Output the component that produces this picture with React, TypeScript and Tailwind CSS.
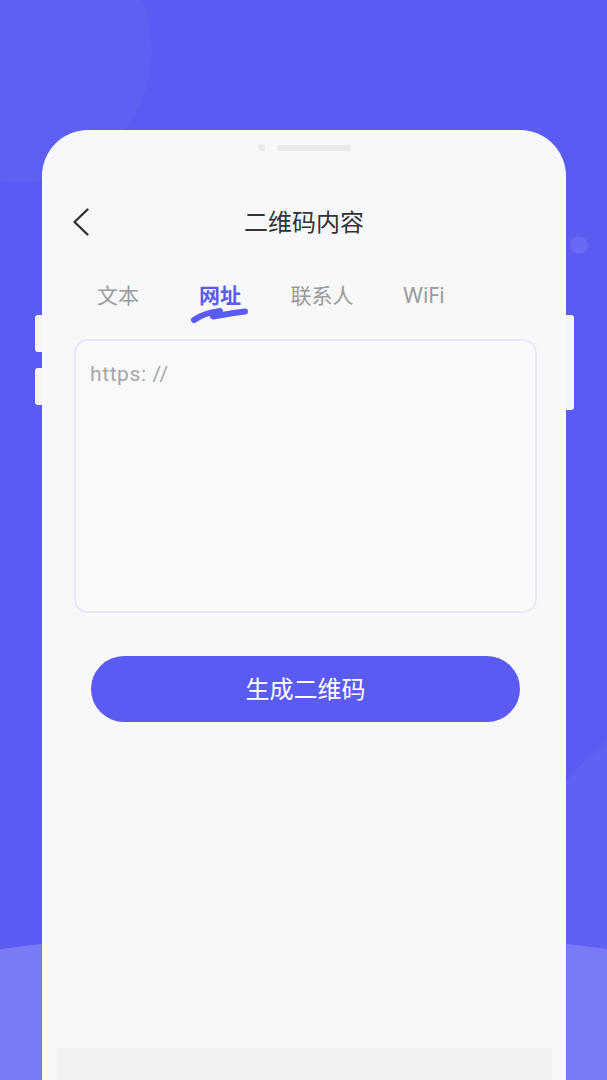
const tabs = ["文本", "网址", "联系人", "WiFi"];
const active = 1;

function Brush() {
  return (
    <svg
      className="absolute left-1/2 top-[29px] -translate-x-1/2"
      width="62"
      height="20"
      viewBox="0 0 62 20"
      fill="none"
    >
      <path
        d="M5 15 C13 9 23 7 31 6 L24 11.5 C35 9.5 46 7.5 56 6.5"
        stroke="#5b5bf3"
        strokeWidth="6"
        strokeLinecap="round"
        strokeLinejoin="round"
      />
    </svg>
  );
}

export default function App() {
  return (
    <main
      className="relative h-[1080px] w-full overflow-hidden bg-[#5b5bf3]"
      style={{ fontFamily: '"Noto Sans", "Noto Sans CJK SC", sans-serif' }}
    >
      {/* background decoration */}
      <div className="absolute left-[-112px] top-[-82px] h-[264px] w-[264px] rounded-full bg-[#5f5ff4]" />
      <div className="absolute left-[570px] top-[236px] h-[18px] w-[18px] rounded-full bg-[#6969f5]" />
      <div className="absolute left-[500px] top-[682px] h-[560px] w-[560px] rounded-full bg-[#6060f4]" />
      <div className="absolute left-[-700px] top-[928px] h-[900px] w-[2007px] rounded-[50%] bg-[#7a7af7]" />

      <div className="relative ml-[42px] mt-[130px] flex h-[950px] w-[524px] flex-col rounded-t-[46px] bg-[#f8f8fa]">
        {/* side buttons */}
        <div className="absolute left-[-7px] top-[185px] h-[37px] w-[8px] rounded-l-[3px] bg-[#f6f6f8]" />
        <div className="absolute left-[-7px] top-[238px] h-[37px] w-[8px] rounded-l-[3px] bg-[#f6f6f8]" />
        <div className="absolute right-[-8px] top-[185px] h-[95px] w-[9px] rounded-r-[3px] bg-[#f6f6f8]" />

        <div className="flex items-center justify-center gap-[12px] pt-[14px]">
          <div className="h-[7px] w-[7px] rounded-full bg-[#e9e9eb]" />
          <div className="h-[6px] w-[74px] rounded-full bg-[#e9e9eb]" />
        </div>

        <div className="relative mt-[46px] flex h-[50px] items-center justify-center">
          <svg
            className="absolute left-[29px] top-1/2 -translate-y-1/2"
            width="20"
            height="30"
            viewBox="0 0 20 30"
            fill="none"
          >
            <path
              d="M16.5 2.5 L3.5 15 L16.5 27.5"
              stroke="#333333"
              strokeWidth="2.4"
              strokeLinecap="round"
              strokeLinejoin="round"
            />
          </svg>
          <h1 className="text-[24px] text-[#333333]">二维码内容</h1>
        </div>

        <div className="mt-[29px] flex h-[40px] pl-[25px]">
          {tabs.map((t, i) => (
            <div
              key={t}
              className={
                i === active
                  ? "relative flex w-[102px] items-center justify-center text-[21px] font-bold text-[#5b5bf3]"
                  : "relative flex w-[102px] items-center justify-center text-[21px] text-[#9a9a9a]"
              }
            >
              <span className="relative z-10">{t}</span>
              {i === active && <Brush />}
            </div>
          ))}
        </div>

        <div className="ml-[32px] mt-[23px] h-[274px] w-[463px] rounded-[14px] border-2 border-[#e8e8f8] bg-[#f9f9fb] px-[14px] pt-[19px]">
          <p
            className="text-[21px] leading-[28px] tracking-[0.6px] text-[#a6a6a6]"
            style={{ fontFamily: "Roboto, sans-serif" }}
          >
            https: //
          </p>
        </div>

        <button className="ml-[49px] mt-[43px] flex h-[66px] w-[429px] items-center justify-center rounded-full bg-[#5b5bf3] text-[24px] text-white">
          生成二维码
        </button>

        <div className="mt-auto ml-[15px] h-[32px] w-[495px] bg-[#f1f1f3]" />
      </div>
    </main>
  );
}
